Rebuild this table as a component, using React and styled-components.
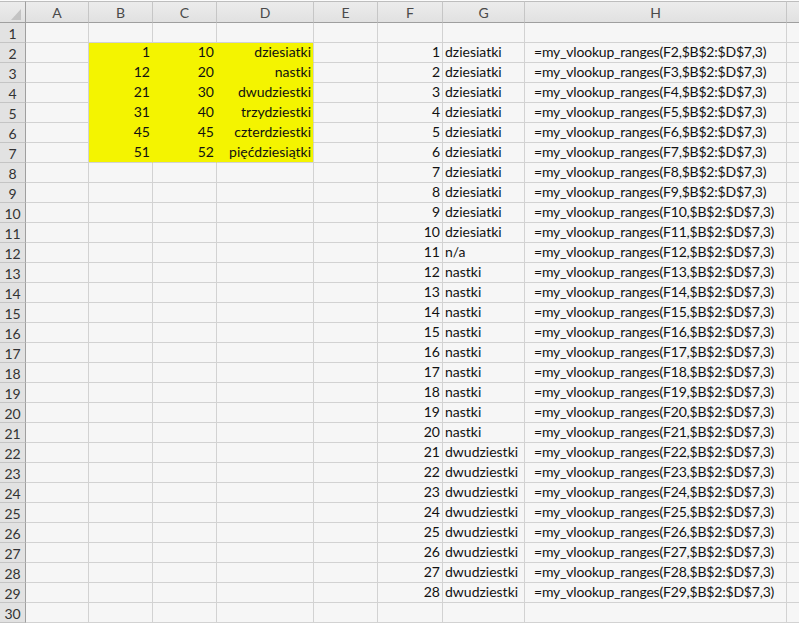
import styled, { createGlobalStyle } from "styled-components";

const GlobalStyle = createGlobalStyle`
  html, body {
    margin: 0;
    padding: 0;
    background: #f6f6f6;
    overflow: hidden;
  }
`;

// last column (I) is cut off by the window, so no letter shows
const COLS = ["A", "B", "C", "D", "E", "F", "G", "H", ""];
const WIDTHS = [26, 63, 64, 64, 97, 64, 65, 82, 262, 40];
const ROW_COUNT = 30;

const Sheet = styled.div`
  display: grid;
  grid-template-columns: ${WIDTHS.map((w) => `${w}px`).join(" ")};
  grid-template-rows: 22px repeat(${ROW_COUNT}, 20px);
  border-top: 1px solid #fbfbfb;
  width: max-content;
  font-family: Lato, "Liberation Sans", sans-serif;
  font-size: 14px;
  color: #111;
`;

const HeadBase = styled.div`
  box-sizing: border-box;
  display: flex;
  align-items: center;
  justify-content: center;
  background: linear-gradient(#ececec, #e1e1e1);
  color: #4a4a4a;
  font-size: 14px;
  white-space: nowrap;
  overflow: hidden;
`;

const Corner = styled(HeadBase)`
  border-top: 1px solid #bdbdbd;
  border-bottom: 1px solid #9f9f9f;
  border-right: 1px solid #9f9f9f;
  align-items: flex-end;
  justify-content: flex-end;
  padding: 0 4px 2px 0;
`;

const ColHead = styled(HeadBase)`
  border-top: 1px solid #bdbdbd;
  border-bottom: 1px solid #9f9f9f;
  border-right: 1px solid #c6c6c6;
`;

const RowHead = styled(HeadBase)`
  background: #e2e2e2;
  border-bottom: 1px solid #c4c4c4;
  border-right: 1px solid #9f9f9f;
  color: #333;
  padding-top: 1px;
`;

const Cell = styled.div`
  box-sizing: border-box;
  display: flex;
  align-items: flex-end;
  justify-content: ${(p) => (p.$align === "right" ? "flex-end" : "flex-start")};
  padding: 0 ${(p) => (p.$align === "right" ? "2px" : "0")} 1px
    ${(p) => p.$indent || "2px"};
  background: ${(p) => (p.$fill ? "#f4f400" : "#f6f6f6")};
  border-right: 1px solid ${(p) => (p.$fill && !p.$edge ? "#f4f400" : "#d2d2d2")};
  border-bottom: 1px solid ${(p) => (p.$fill && !p.$last ? "#f4f400" : "#d2d2d2")};
  white-space: nowrap;
  line-height: 18px;
`;

const FormulaCell = styled(Cell)`
  letter-spacing: -0.2px;
`;

const left = [
  [1, 10, "dziesiatki"],
  [12, 20, "nastki"],
  [21, 30, "dwudziestki"],
  [31, 40, "trzydziestki"],
  [45, 45, "czterdziestki"],
  [51, 52, "pięćdziesiątki"],
];

function label(n) {
  if (n <= 10) return "dziesiatki";
  if (n === 11) return "n/a";
  if (n <= 20) return "nastki";
  return "dwudziestki";
}

function CornerMark() {
  return (
    <svg width="10" height="11" viewBox="0 0 10 11">
      <polygon points="10,0 10,11 0,11" fill="#c3c3c3" />
    </svg>
  );
}

function Row({ r }) {
  const data = r >= 2 && r <= 7 ? left[r - 2] : null;
  const n = r >= 2 && r <= 29 ? r - 1 : null;
  return (
    <>
      <RowHead>{r}</RowHead>
      <Cell />
      <Cell $align="right" $fill={!!data} $last={r === 7}>
        {data && data[0]}
      </Cell>
      <Cell $align="right" $fill={!!data} $last={r === 7}>
        {data && data[1]}
      </Cell>
      <Cell $align="right" $fill={!!data} $last={r === 7} $edge>
        {data && data[2]}
      </Cell>
      <Cell />
      <Cell $align="right">{n}</Cell>
      <Cell>{n && label(n)}</Cell>
      <FormulaCell $indent="9px">
        {n && `=my_vlookup_ranges(F${r},$B$2:$D$7,3)`}
      </FormulaCell>
      <Cell />
    </>
  );
}

export default function App() {
  const rows = Array.from({ length: ROW_COUNT }, (_, i) => i + 1);
  return (
    <>
      <GlobalStyle />
      <Sheet>
        <Corner>
          <CornerMark />
        </Corner>
        {COLS.map((c, i) => (
          <ColHead key={i}>{c}</ColHead>
        ))}
        {rows.map((r) => (
          <Row key={r} r={r} />
        ))}
      </Sheet>
    </>
  );
}
